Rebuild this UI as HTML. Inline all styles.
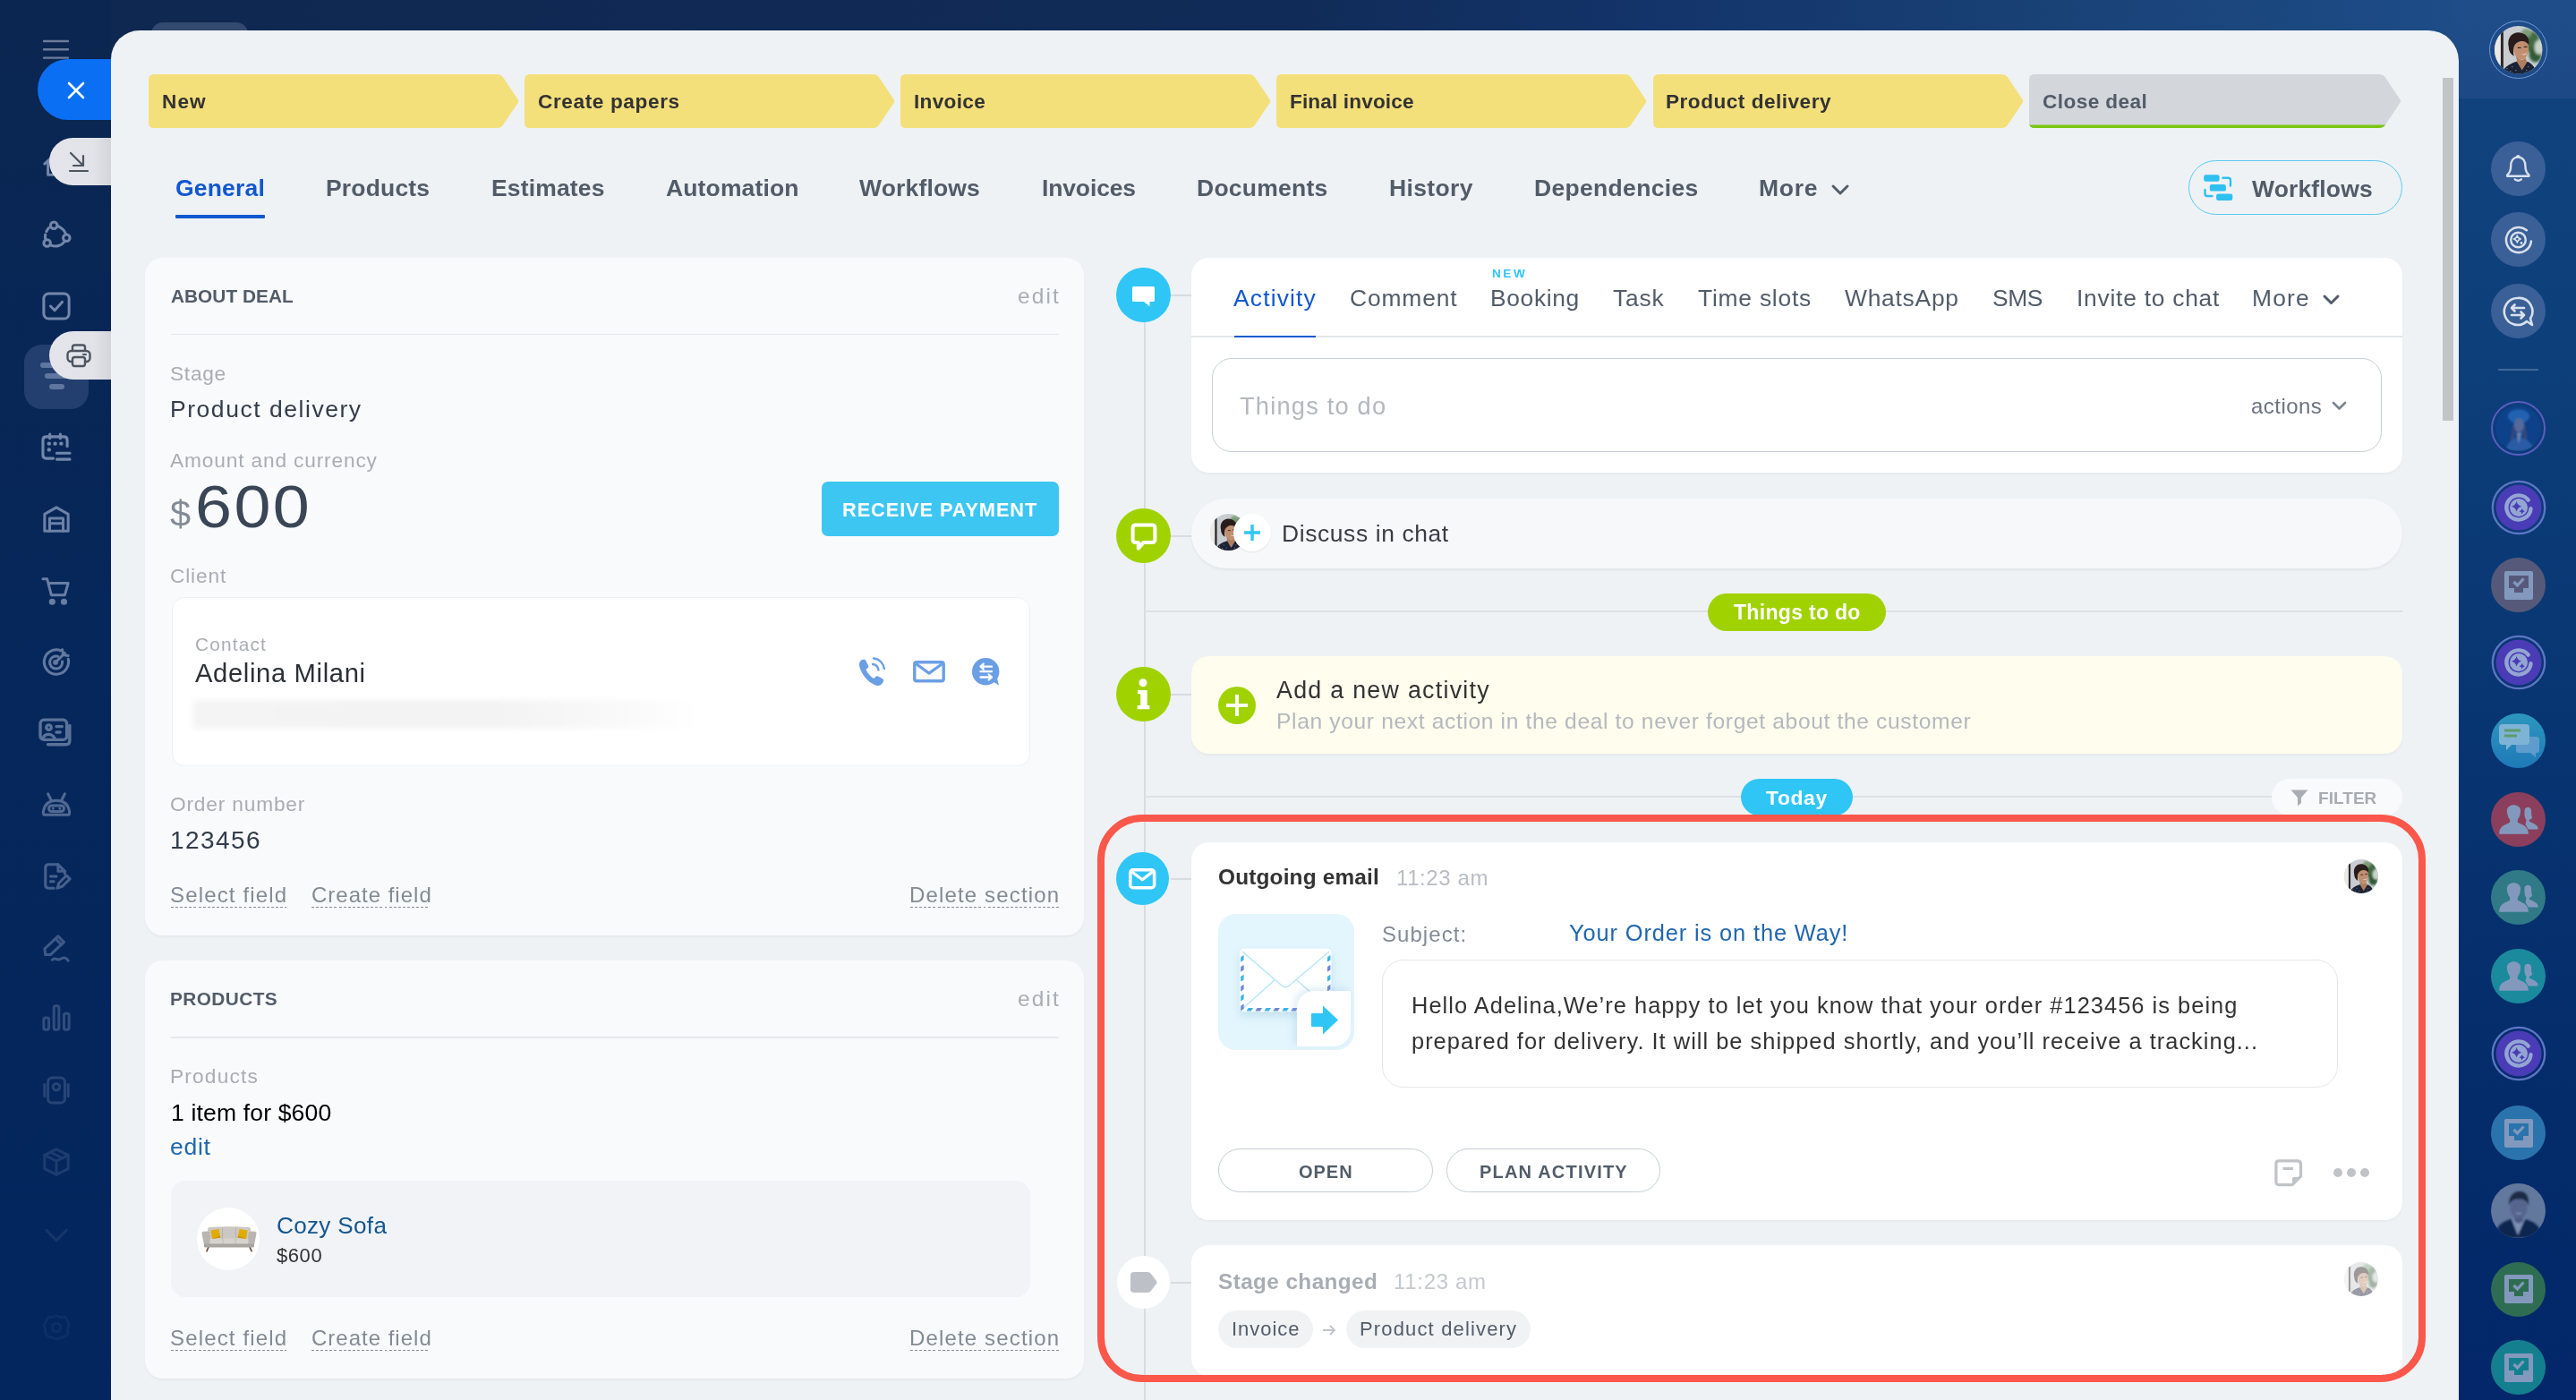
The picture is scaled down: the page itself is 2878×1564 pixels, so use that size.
<!DOCTYPE html>
<html lang="en">
<head>
<meta charset="utf-8">
<title>Deal</title>
<style>
*{box-sizing:border-box;margin:0;padding:0}
html,body{width:2878px;height:1564px;overflow:hidden}
body{position:relative;font-family:"Liberation Sans",sans-serif;background:#0a2a5e;color:#333}
.a{position:absolute}
.t{position:absolute;white-space:nowrap;line-height:1;will-change:transform}
.b{font-weight:bold}
svg{position:absolute;overflow:visible}
#topband{left:0;top:0;width:2878px;height:60px;background:linear-gradient(90deg,#0e2850 0%,#102b57 50%,#13346a 64%,#194277 80%,#1f4f8c 100%)}
#leftbar{left:0;top:0;width:124px;height:1564px;background:linear-gradient(180deg,#0b2651 0%,#06275a 45%,#03265f 100%)}
#rail{left:2740px;top:0;width:138px;height:1564px;background:linear-gradient(180deg,#11447f 0%,#10437e 7%,#0d3f7b 25%,#083672 50%,#042c6a 78%,#03276a 100%)}
#panel{left:124px;top:34px;width:2623px;height:1560px;background:#eef2f5;border-radius:32px 34px 0 0}
.ico{stroke:#8fa0c0;stroke-width:3.2;fill:none;stroke-linecap:round;stroke-linejoin:round}
.card{position:absolute;background:#f9fafb;border-radius:20px;box-shadow:0 2px 3px rgba(0,0,0,.04)}
.circ{position:absolute;border-radius:50%}
.wcard{position:absolute;left:1331px;width:1353px;background:#fff;border-radius:20px;box-shadow:0 2px 3px rgba(0,0,0,.03)}
</style>
</head>
<body>
<div class="a" id="topband"></div>
<div class="a" id="leftbar"></div>
<div class="a" id="rail"></div>
<div class="a" style="left:2740px;top:0px;width:138px;height:110px;background:linear-gradient(180deg,#1f4d8a,#1d4a87);"></div>
<svg style="left:48px;top:44px;" width="29" height="23"><path d="M1,2 H28 M1,11.3 H28 M1,20.6 H28" stroke="#6d7c99" stroke-width="2.4" stroke-linecap="round"/></svg>
<svg class="ico" style="left:47.0px;top:168.0px;opacity:0.8" width="32" height="32" viewBox="0 0 34 34"><path d="M3,16 L17,3 L31,16 M7,13 V29 H27 V13"/></svg>
<svg class="ico" style="left:46.5px;top:247.0px;opacity:0.8" width="32" height="32" viewBox="0 0 34 34"><circle cx="14" cy="5" r="4"/><circle cx="29" cy="20" r="4"/><circle cx="6" cy="26" r="4"/><path d="M19,6 C23,8 27,11 28,15"/><path d="M26,25 C23,29 17,31 11,29"/><path d="M4,21 C3,16 5,11 9,7" stroke-dasharray="5 4"/></svg>
<svg class="ico" style="left:46.5px;top:325.6px;opacity:0.8" width="32" height="32" viewBox="0 0 34 34"><rect x="2" y="2" width="30" height="30" rx="6"/><path d="M10,17 L15,22 L24,12"/></svg>
<div class="a" style="left:27px;top:385px;width:72px;height:72px;background:#223f70;border-radius:20px;"></div>
<svg style="left:45px;top:404px;" width="36" height="34"><path d="M3,4 H26 M8,16 H31 M13,28 H24" stroke="#5f76a0" stroke-width="6" stroke-linecap="round"/></svg>
<svg class="ico" style="left:46.0px;top:482.5px;opacity:0.8" width="33" height="33" viewBox="0 0 34 34"><path d="M14,30 H6 Q2,30 2,26 V9 Q2,5 6,5 H26 Q30,5 30,9 V16"/><path d="M10,2 V7 M22,2 V7"/><path d="M18,24 H33 M18,31 H33"/><path d="M9,13 h0.1 M16,13 h0.1 M23,13 h0.1 M9,20 h0.1" stroke-width="4.5"/></svg>
<svg class="ico" style="left:46.5px;top:564.0px;opacity:0.75" width="32" height="32" viewBox="0 0 34 34"><path d="M3,31 V11 L17,3 L31,11 V31 Z"/><path d="M9,31 V16 H25 V31 M9,22 H25"/></svg>
<svg class="ico" style="left:46.5px;top:644.0px;opacity:0.72" width="32" height="32" viewBox="0 0 34 34"><path d="M1,3 H6 L11,22 H27 L31,8 H9"/><circle cx="12" cy="30" r="2.2" fill="#8fa0c0"/><circle cx="26" cy="30" r="2.2" fill="#8fa0c0"/></svg>
<svg class="ico" style="left:46.5px;top:723.0px;opacity:0.68" width="32" height="32" viewBox="0 0 34 34"><path d="M22,4 A14.5,14.5 0 1 0 31,14"/><path d="M19,11 A7.5,7.5 0 1 0 24,17"/><path d="M16,18 L27,7 M24,3 L25,9 L31,10"/><circle cx="16" cy="18" r="1.5" fill="#8fa0c0"/></svg>
<svg class="ico" style="left:45.0px;top:801.0px;opacity:0.62" width="36" height="36" viewBox="0 0 34 34"><rect x="0" y="3" width="28" height="21" rx="4"/><path d="M31,9 V25 Q31,29 27,29 H8"/><circle cx="9" cy="11" r="2.6"/><path d="M3,22 C5,17 12,17 15,22"/><path d="M17,10 H23 M17,16 H21"/></svg>
<svg class="ico" style="left:46.5px;top:883.0px;opacity:0.55" width="32" height="32" viewBox="0 0 34 34"><path d="M3,29 Q1,29 1.5,25 C3,16 9,12 17,12 C25,12 31,16 32.5,25 Q33,29 31,29 Z"/><path d="M7,4 L11,12 M27,4 L23,12"/><rect x="8" y="18" width="18" height="7" rx="3.5"/><path d="M13,21.5 h0.1 M21,21.5 h0.1" stroke-width="3"/></svg>
<svg class="ico" style="left:46.5px;top:963.0px;opacity:0.48" width="32" height="32" viewBox="0 0 34 34"><path d="M14,31 H8 Q4,31 4,27 V7 Q4,3 8,3 H19 L27,11 V14"/><path d="M19,3 V11 H27"/><path d="M10,17 H17 M10,23 H14"/><path d="M18,31 L20,25 L29,16 L33,20 L24,29 Z"/></svg>
<svg class="ico" style="left:46.5px;top:1044.0px;opacity:0.42" width="32" height="32" viewBox="0 0 34 34"><path d="M4,24 L3,17 L19,2 L26,9 L10,24 Z"/><path d="M16,5 L23,12"/><path d="M4,24 L8,24"/><path d="M12,30 C16,26 18,32 22,29 C26,26 29,28 31,31"/></svg>
<svg class="ico" style="left:46.5px;top:1121.0px;opacity:0.32" width="32" height="32" viewBox="0 0 34 34"><rect x="2" y="17" width="6" height="14" rx="2"/><rect x="14" y="3" width="6" height="28" rx="2"/><rect x="26" y="12" width="6" height="19" rx="2"/></svg>
<svg class="ico" style="left:46.5px;top:1202.0px;opacity:0.25" width="32" height="32" viewBox="0 0 34 34"><rect x="7" y="2" width="20" height="30" rx="5"/><path d="M3,10 V24 M31,10 V24"/><circle cx="17" cy="13" r="4"/></svg>
<svg class="ico" style="left:46.5px;top:1282.0px;opacity:0.18" width="32" height="32" viewBox="0 0 34 34"><path d="M17,2 L31,9 V25 L17,32 L3,25 V9 Z"/><path d="M3,9 L17,16 L31,9 M17,16 V32 M10,5.5 L24,12.5"/></svg>
<svg class="ico" style="left:46.5px;top:1363.0px;opacity:0.13" width="32" height="32" viewBox="0 0 34 34"><path d="M5,12 L17,24 L29,12"/></svg>
<svg class="ico" style="left:46.5px;top:1467.0px;opacity:0.07" width="32" height="32" viewBox="0 0 34 34"><path d="M17,3 L22,5 L27,4 L30,9 L32,14 L30,19 L31,24 L27,28 L22,29 L17,31 L12,29 L7,28 L4,24 L4,19 L2,14 L5,9 L8,4 L12,5 Z"/><circle cx="17" cy="17" r="5"/></svg>
<div class="a" style="left:168.5px;top:25px;width:108.5px;height:30px;background:#33496f;border-radius:13px 13px 0 0;"></div>
<div class="a" style="left:42px;top:66px;width:100px;height:68px;background:#0b6ff3;border-radius:34px 0 0 34px;"></div>
<svg style="left:75px;top:91px;" width="20" height="20"><path d="M2,2 L18,18 M18,2 L2,18" stroke="#fff" stroke-width="2.6" stroke-linecap="round"/></svg>
<div class="a" style="left:55px;top:154px;width:90px;height:53px;background:linear-gradient(90deg,#e3e5ea 0%,#e1e3e8 55%,#d3d5da 77%);border-radius:27px 0 0 27px;"></div>
<svg style="left:76px;top:169px;" width="24" height="24"><path d="M3,2 L17,16 M17,5 V16 H6 M2,22 H22" stroke="#4d5560" stroke-width="2.2" fill="none" stroke-linecap="round" stroke-linejoin="round"/></svg>
<div class="a" style="left:55px;top:370px;width:90px;height:54px;background:linear-gradient(90deg,#e3e5ea 0%,#e1e3e8 55%,#d3d5da 77%);border-radius:27px 0 0 27px;"></div>
<svg style="left:74px;top:384px;" width="28" height="27" viewBox="0 0 28 27"><path d="M7,9 V4 Q7,1.500 9.500,1.500 H18.500 Q21,1.500 21,4 V9" fill="none" stroke="#4d5560" stroke-width="2.4"/><rect x="1.500" y="8" width="25" height="12" rx="4" fill="none" stroke="#4d5560" stroke-width="2.4"/><rect x="7" y="15" width="14" height="10" rx="2.500" fill="#e2e4e9" stroke="#4d5560" stroke-width="2.4"/><path d="M19,12 H22" stroke="#4d5560" stroke-width="2.2" stroke-linecap="round"/></svg>
<div class="a" id="panel"></div>
<svg style="left:166.0px;top:83px;" width="413.5" height="60"><path d="M6,0 H388.5 Q394.5,0 396.5,4 L412.9,28.5 Q413.5,30.0 412.9,31.5 L396.5,56 Q394.5,60 388.5,60 H6 Q0,60 0,54 V6 Q0,0 6,0 Z" fill="#f4e07a"/></svg>
<div class="t b" id="s0" style="left:180.5px;top:102.7px;font-size:22.6px;color:#333;letter-spacing:1.11px;">New</div>
<svg style="left:586.1px;top:83px;" width="413.5" height="60"><path d="M6,0 H388.5 Q394.5,0 396.5,4 L412.9,28.5 Q413.5,30.0 412.9,31.5 L396.5,56 Q394.5,60 388.5,60 H6 Q0,60 0,54 V6 Q0,0 6,0 Z" fill="#f4e07a"/></svg>
<div class="t b" id="s1" style="left:600.6px;top:102.7px;font-size:22.6px;color:#333;letter-spacing:0.62px;">Create papers</div>
<svg style="left:1006.3px;top:83px;" width="413.5" height="60"><path d="M6,0 H388.5 Q394.5,0 396.5,4 L412.9,28.5 Q413.5,30.0 412.9,31.5 L396.5,56 Q394.5,60 388.5,60 H6 Q0,60 0,54 V6 Q0,0 6,0 Z" fill="#f4e07a"/></svg>
<div class="t b" id="s2" style="left:1021.0px;top:102.7px;font-size:22.6px;color:#333;letter-spacing:0.31px;">Invoice</div>
<svg style="left:1426.4px;top:83px;" width="413.5" height="60"><path d="M6,0 H388.5 Q394.5,0 396.5,4 L412.9,28.5 Q413.5,30.0 412.9,31.5 L396.5,56 Q394.5,60 388.5,60 H6 Q0,60 0,54 V6 Q0,0 6,0 Z" fill="#f4e07a"/></svg>
<div class="t b" id="s3" style="left:1441.3px;top:102.7px;font-size:22.6px;color:#333;letter-spacing:0.14px;">Final invoice</div>
<svg style="left:1846.6px;top:83px;" width="413.5" height="60"><path d="M6,0 H388.5 Q394.5,0 396.5,4 L412.9,28.5 Q413.5,30.0 412.9,31.5 L396.5,56 Q394.5,60 388.5,60 H6 Q0,60 0,54 V6 Q0,0 6,0 Z" fill="#f4e07a"/></svg>
<div class="t b" id="s4" style="left:1861.3px;top:102.7px;font-size:22.6px;color:#333;letter-spacing:0.50px;">Product delivery</div>
<svg style="left:2266.8px;top:83px;" width="415.3" height="60"><path d="M6,0 H390.3 Q396.3,0 398.3,4 L414.7,28.5 Q415.3,30.0 414.7,31.5 L398.3,56 Q396.3,60 390.3,60 H6 Q0,60 0,54 V6 Q0,0 6,0 Z" fill="#d3d7dc"/><clipPath id="cls"><path d="M6,0 H390.3 Q396.3,0 398.3,4 L414.7,28.5 Q415.3,30.0 414.7,31.5 L398.3,56 Q396.3,60 390.3,60 H6 Q0,60 0,54 V6 Q0,0 6,0 Z"/></clipPath><rect x="0" y="56.5" width="401.3" height="4" fill="#7ac70f" clip-path="url(#cls)"/></svg>
<div class="t b" id="s5" style="left:2281.7px;top:102.7px;font-size:22.6px;color:#525c69;letter-spacing:0.42px;">Close deal</div>
<div class="t b" id="tab0" style="left:196.0px;top:197.3px;font-size:26.5px;color:#1058d0;letter-spacing:0.18px;">General</div>
<div class="t b" id="tab1" style="left:364.2px;top:197.3px;font-size:26.5px;color:#525c69;letter-spacing:0.18px;">Products</div>
<div class="t b" id="tab2" style="left:548.7px;top:197.3px;font-size:26.5px;color:#525c69;letter-spacing:0.15px;">Estimates</div>
<div class="t b" id="tab3" style="left:743.7px;top:197.3px;font-size:26.5px;color:#525c69;letter-spacing:0.14px;">Automation</div>
<div class="t b" id="tab4" style="left:960.2px;top:197.3px;font-size:26.5px;color:#525c69;letter-spacing:0.17px;">Workflows</div>
<div class="t b" id="tab5" style="left:1163.7px;top:197.3px;font-size:26.5px;color:#525c69;letter-spacing:-0.14px;">Invoices</div>
<div class="t b" id="tab6" style="left:1337.4px;top:197.3px;font-size:26.5px;color:#525c69;letter-spacing:0.25px;">Documents</div>
<div class="t b" id="tab7" style="left:1552.2px;top:197.3px;font-size:26.5px;color:#525c69;letter-spacing:0.36px;">History</div>
<div class="t b" id="tab8" style="left:1713.9px;top:197.3px;font-size:26.5px;color:#525c69;letter-spacing:0.32px;">Dependencies</div>
<div class="t b" id="tab9" style="left:1965.4px;top:197.3px;font-size:26.5px;color:#525c69;letter-spacing:0.69px;">More</div>
<div class="a" style="left:196px;top:240px;width:100px;height:4px;background:#1058d0;border-radius:1px;"></div>
<svg style="left:2046px;top:205.5px;" width="20" height="12"><path d="M2,2 L10,10 L18,2" stroke="#525c69" stroke-width="3" fill="none" stroke-linecap="round" stroke-linejoin="round"/></svg>
<div class="a" style="left:2445px;top:179px;width:239px;height:61px;border-radius:31px;border:1.5px solid #5cc9ef;"></div>
<svg style="left:2462px;top:195px;" width="34" height="30" viewBox="0 0 34 30"><rect x="0.2" y="0.2" width="17.4" height="7.6" rx="2.2" fill="#2fc0f2"/><rect x="6.8" y="11" width="18.1" height="7.6" rx="2.2" fill="#2fc0f2"/><rect x="14.1" y="21.4" width="18.2" height="7.6" rx="2.2" fill="#2fc0f2"/><path d="M21.500,3.800 H27.500 Q30,3.800 30,6.300 V12.500" stroke="#2fc0f2" stroke-width="2.4" fill="none" stroke-linecap="round"/><path d="M1.500,17 V21.500 Q1.500,24 4,24 H9.500" stroke="#2fc0f2" stroke-width="2.4" fill="none" stroke-linecap="round"/></svg>
<div class="t b" id="wfbtn" style="left:2516.1px;top:197.8px;font-size:26.5px;color:#525c69;letter-spacing:0.15px;">Workflows</div>
<div class="card" style="left:162px;top:288px;width:1049px;height:757px"></div>
<div class="t b" id="t-about" style="left:190.5px;top:321.1px;font-size:20.8px;color:#525c69;letter-spacing:0.04px;">ABOUT DEAL</div>
<div class="t" id="t-edit1" style="left:1136.9px;top:319.0px;font-size:24.5px;color:#a8adb4;letter-spacing:2.11px;">edit</div>
<div class="a" style="left:191px;top:372.6px;width:992px;height:1.5px;background:#e6e8eb;"></div>
<div class="t" id="l-stage" style="left:190.4px;top:405.5px;font-size:22.7px;color:#a8adb4;letter-spacing:0.73px;">Stage</div>
<div class="t" id="t-stage" style="left:190.2px;top:443.8px;font-size:26.5px;color:#333d4b;letter-spacing:1.54px;">Product delivery</div>
<div class="t" id="l-amount" style="left:190.4px;top:502.7px;font-size:22.7px;color:#a8adb4;letter-spacing:0.85px;">Amount and currency</div>
<div class="t" id="t-dollar" style="left:190.3px;top:552.6px;font-size:41.5px;color:#828b95;letter-spacing:0.00px;">$</div>
<div class="t" id="t-600" style="left:217.5px;top:531.8px;font-size:67px;color:#3a4556;letter-spacing:2.17px;transform:scaleX(1.1);transform-origin:0 0;">600</div>
<div class="a" style="left:918px;top:538px;width:265px;height:61px;background:#3ec6f3;border-radius:7px;"></div>
<div class="t b" id="t-recv" style="left:941.3px;top:558.7px;font-size:21.8px;color:#fff;letter-spacing:0.90px;">RECEIVE PAYMENT</div>
<div class="t" id="l-client" style="left:190.4px;top:632.1px;font-size:22.7px;color:#a8adb4;letter-spacing:0.84px;">Client</div>
<div class="a" style="left:191.5px;top:666.5px;width:959.5px;height:189px;background:#fff;border-radius:14px;border:1.5px solid #eef0f2;"></div>
<div class="t" id="l-contact" style="left:217.9px;top:709.7px;font-size:20.8px;color:#a8adb4;letter-spacing:1.20px;">Contact</div>
<div class="t" id="t-name" style="left:217.5px;top:737.9px;font-size:29.2px;color:#2b2f36;letter-spacing:0.64px;">Adelina Milani</div>
<div class="a" style="left:216px;top:782px;width:570px;height:32px;background:linear-gradient(90deg,#f4f4f5 0%,#f3f3f4 60%,rgba(246,246,247,.6) 85%,rgba(255,255,255,0) 100%);filter:blur(3px);"></div>
<svg style="left:957px;top:732px;" width="34" height="36" viewBox="0 0 34 36"><path d="M6,5 C3,7 2,10 4,15 C7,23 12,29 20,33 C24,35 27,34 29,31 L30,29 C30.5,28 30,27 29,26.3 L24,23.5 C23,23 22,23.2 21.3,24 L19.5,26 C16,24 12,20 10.5,16 L12.5,14.3 C13.3,13.6 13.5,12.6 13,11.6 L10.3,6 C9.8,5 8.8,4.5 7.8,4.8 Z" fill="#6a9fe6"/><path d="M18,10 C21.5,10.5 24,13 24.5,16.5" stroke="#6a9fe6" stroke-width="2.4" fill="none" stroke-linecap="round"/><path d="M19,3.5 C25.5,4.2 30,9 31,15" stroke="#6a9fe6" stroke-width="2.4" fill="none" stroke-linecap="round"/></svg>
<svg style="left:1020px;top:738px;" width="36" height="24.5" viewBox="0 0 38 26"><rect x="1.8" y="1.8" width="34.4" height="22.4" rx="2.5" fill="none" stroke="#6a9fe6" stroke-width="3.6"/><path d="M3,3.5 L19,15 L35,3.5" fill="none" stroke="#6a9fe6" stroke-width="3.4" stroke-linejoin="round"/></svg>
<svg style="left:1085.9px;top:734.8px;" width="33" height="33" viewBox="0 0 33 33"><circle cx="15.2" cy="15.2" r="15.2" fill="#6a9fe6"/><path d="M22,25.500 L30,30.500 L27.500,21 Z" fill="#6a9fe6"/><path d="M9.500,9.700 H22 M9.500,9.700 L12.800,6.700 M9.500,9.700 L12.800,12.700" stroke="#fff" stroke-width="2.300" fill="none" stroke-linecap="round" stroke-linejoin="round"/><path d="M9.500,15.200 H22" stroke="#fff" stroke-width="2.300" stroke-linecap="round"/><path d="M22,21.500 H9.500 M22,21.500 L18.700,18.500 M22,21.500 L18.700,24.500" stroke="#fff" stroke-width="2.300" fill="none" stroke-linecap="round" stroke-linejoin="round"/></svg>
<div class="t" id="l-order" style="left:190.4px;top:887.2px;font-size:22.7px;color:#a8adb4;letter-spacing:0.83px;">Order number</div>
<div class="t" id="t-order" style="left:190.1px;top:924.8px;font-size:28px;color:#333d4b;letter-spacing:1.45px;">123456</div>
<div class="t" id="k-sel1" style="left:190.3px;top:987.9px;font-size:24px;color:#828b95;letter-spacing:1.16px;">Select field</div>
<div class="a" style="left:190.9px;top:1012.7px;width:129.4px;height:1.6px;background:repeating-linear-gradient(90deg,#858d97 0,#858d97 2.9px,transparent 2.9px,transparent 5.1px)"></div>
<div class="t" id="k-cre1" style="left:347.7px;top:987.9px;font-size:24px;color:#828b95;letter-spacing:1.00px;">Create field</div>
<div class="a" style="left:348.3px;top:1012.7px;width:132.89999999999998px;height:1.6px;background:repeating-linear-gradient(90deg,#858d97 0,#858d97 2.9px,transparent 2.9px,transparent 5.1px)"></div>
<div class="t" id="k-del1" style="left:1016.2px;top:987.9px;font-size:24px;color:#828b95;letter-spacing:1.15px;">Delete section</div>
<div class="a" style="left:1016.8px;top:1012.7px;width:166.29999999999995px;height:1.6px;background:repeating-linear-gradient(90deg,#858d97 0,#858d97 2.9px,transparent 2.9px,transparent 5.1px)"></div>
<div class="card" style="left:162px;top:1073px;width:1049px;height:467px"></div>
<div class="t b" id="t-products" style="left:189.9px;top:1106.4px;font-size:20.8px;color:#525c69;letter-spacing:0.42px;">PRODUCTS</div>
<div class="t" id="t-edit2" style="left:1136.9px;top:1104.0px;font-size:24.5px;color:#a8adb4;letter-spacing:2.11px;">edit</div>
<div class="a" style="left:191px;top:1158.2px;width:992px;height:1.5px;background:#e6e8eb;"></div>
<div class="t" id="l-products" style="left:189.8px;top:1190.5px;font-size:22.7px;color:#a8adb4;letter-spacing:1.18px;">Products</div>
<div class="t" id="t-item" style="left:190.6px;top:1229.9px;font-size:26.5px;color:#000;letter-spacing:0.17px;">1 item for $600</div>
<div class="t" id="t-edit3" style="left:190.1px;top:1268.1px;font-size:26.5px;color:#2067b0;letter-spacing:0.72px;">edit</div>
<div class="a" style="left:191px;top:1318.5px;width:960px;height:130.5px;background:#f1f3f6;border-radius:16px;"></div>
<div class="circ" style="left:220.0px;top:1349.0px;width:70px;height:70px;background:#fff;"></div>
<svg style="left:223.5px;top:1369px;" width="64" height="29" viewBox="0 0 64 29"><path d="M9,24 L7,28.600 M55,24 L57,28.600" stroke="#6b4a35" stroke-width="1.700" stroke-linecap="round"/><path d="M10,2 Q32,0.500 54,2 Q56.500,2.300 56,5 L54.500,16 H9.500 L8,5 Q7.500,2.300 10,2 Z" fill="#cbc8c3"/><path d="M24.500,2.500 V15 M39.500,2.500 V15" stroke="#b3b0ab" stroke-width="0.900"/><path d="M1.500,9 Q1,7 3,6.800 L8,6.500 Q10,6.500 10.300,8.500 L12,22 H4 Z" fill="#b9b6b1"/><path d="M62.500,9 Q63,7 61,6.800 L56,6.500 Q54,6.500 53.700,8.500 L52,22 H60 Z" fill="#b9b6b1"/><rect x="10.500" y="14.500" width="43" height="6.500" rx="1.500" fill="#d6d3ce"/><path d="M25,14.800 V21 M39,14.800 V21" stroke="#bcb9b4" stroke-width="0.800"/><rect x="4" y="20.500" width="56" height="4" rx="1.200" fill="#a8a5a0"/><path d="M11.500,5.500 L20.500,4 L22.500,13.500 L13,15 Z" fill="#e2ab00"/><path d="M52.500,5.500 L43.500,4 L41.500,13.500 L51,15 Z" fill="#e2ab00"/><path d="M13,15 L22.500,13.500 L21.800,11.500 Z" fill="#c89400"/><path d="M51,15 L41.500,13.500 L42.200,11.500 Z" fill="#c89400"/></svg>
<div class="t" id="t-sofa" style="left:308.8px;top:1356.4px;font-size:26.1px;color:#14568f;letter-spacing:0.32px;">Cozy Sofa</div>
<div class="t" id="t-price" style="left:309.0px;top:1392.4px;font-size:22px;color:#333;letter-spacing:0.57px;">$600</div>
<div class="t" id="k-sel2" style="left:190.3px;top:1482.9px;font-size:24px;color:#828b95;letter-spacing:1.16px;">Select field</div>
<div class="a" style="left:190.9px;top:1507.7px;width:129.4px;height:1.6px;background:repeating-linear-gradient(90deg,#858d97 0,#858d97 2.9px,transparent 2.9px,transparent 5.1px)"></div>
<div class="t" id="k-cre2" style="left:347.7px;top:1482.9px;font-size:24px;color:#828b95;letter-spacing:1.00px;">Create field</div>
<div class="a" style="left:348.3px;top:1507.7px;width:132.89999999999998px;height:1.6px;background:repeating-linear-gradient(90deg,#858d97 0,#858d97 2.9px,transparent 2.9px,transparent 5.1px)"></div>
<div class="t" id="k-del2" style="left:1016.2px;top:1482.9px;font-size:24px;color:#828b95;letter-spacing:1.15px;">Delete section</div>
<div class="a" style="left:1016.8px;top:1507.7px;width:166.29999999999995px;height:1.6px;background:repeating-linear-gradient(90deg,#858d97 0,#858d97 2.9px,transparent 2.9px,transparent 5.1px)"></div>
<div class="a" style="left:1278px;top:330px;width:2px;height:1240px;background:#d8dce1;"></div>
<div class="a" style="left:1279px;top:682px;width:1405px;height:2px;background:#dde1e6;"></div>
<div class="a" style="left:1279px;top:889px;width:1405px;height:2px;background:#dde1e6;"></div>
<div class="a" style="left:1308px;top:329.3px;width:23px;height:1.5px;background:#d8dce1;"></div>
<div class="a" style="left:1308px;top:598.3px;width:23px;height:1.5px;background:#d8dce1;"></div>
<div class="a" style="left:1308px;top:775.3px;width:23px;height:1.5px;background:#d8dce1;"></div>
<div class="a" style="left:1308px;top:981.3px;width:23px;height:1.5px;background:#d8dce1;"></div>
<div class="a" style="left:1308px;top:1432.3px;width:23px;height:1.5px;background:#d8dce1;"></div>
<div class="wcard" style="top:288px;height:240px"></div>
<div class="a" style="left:1331px;top:375px;width:1353px;height:2px;background:#e4e7ea;"></div>
<div class="t" id="at0" style="left:1378.0px;top:320.0px;font-size:26.4px;color:#1058d0;letter-spacing:1.17px;">Activity</div>
<div class="t" id="at1" style="left:1507.6px;top:320.0px;font-size:26.4px;color:#525c69;letter-spacing:0.88px;">Comment</div>
<div class="t" id="at2" style="left:1665.2px;top:320.0px;font-size:26.4px;color:#525c69;letter-spacing:0.65px;">Booking</div>
<div class="t" id="at3" style="left:1802.3px;top:320.0px;font-size:26.4px;color:#525c69;letter-spacing:0.80px;">Task</div>
<div class="t" id="at4" style="left:1896.5px;top:320.0px;font-size:26.4px;color:#525c69;letter-spacing:0.78px;">Time slots</div>
<div class="t" id="at5" style="left:2061.1px;top:320.0px;font-size:26.4px;color:#525c69;letter-spacing:0.75px;">WhatsApp</div>
<div class="t" id="at6" style="left:2225.8px;top:320.0px;font-size:26.4px;color:#525c69;letter-spacing:-0.36px;">SMS</div>
<div class="t" id="at7" style="left:2319.8px;top:320.0px;font-size:26.4px;color:#525c69;letter-spacing:0.75px;">Invite to chat</div>
<div class="t" id="at8" style="left:2516.4px;top:320.0px;font-size:26.4px;color:#525c69;letter-spacing:1.18px;">More</div>
<div class="a" style="left:1378.5px;top:374.6px;width:91.5px;height:2.5px;background:#1058d0;"></div>
<div class="t b" id="t-new" style="left:1666.8px;top:298.9px;font-size:13.6px;color:#2fc6f6;letter-spacing:2.55px;">NEW</div>
<svg style="left:2595px;top:329px;" width="19" height="12"><path d="M2,2 L9.5,9.5 L17,2" stroke="#525c69" stroke-width="3" fill="none" stroke-linecap="round" stroke-linejoin="round"/></svg>
<div class="a" style="left:1354px;top:400px;width:1307px;height:105px;background:#fff;border-radius:22px;border:1.5px solid #c9cfd5;"></div>
<div class="t" id="t-things" style="left:1385.0px;top:440.3px;font-size:27.3px;color:#b3b8be;letter-spacing:1.17px;">Things to do</div>
<div class="t" id="t-actions" style="left:2514.9px;top:442.1px;font-size:24px;color:#6a737f;letter-spacing:0.46px;">actions</div>
<svg style="left:2605px;top:448px;" width="17" height="11"><path d="M2,2 L8.5,8.5 L15,2" stroke="#7b848f" stroke-width="2.6" fill="none" stroke-linecap="round" stroke-linejoin="round"/></svg>
<div class="circ" style="left:1247.0px;top:299.0px;width:61px;height:61px;background:#2fc6f6;"></div>
<svg style="left:1264.3px;top:320px;" width="27" height="24" viewBox="0 0 27 24"><path d="M2.5,0 H24.5 Q26,0 26,1.5 V15.5 Q26,17 24.5,17 H20.5 V22.5 L14,17 H2.5 Q1,17 1,15.5 V1.5 Q1,0 2.5,0 Z" fill="#fff"/></svg>
<div class="a" style="left:1331px;top:557px;width:1353px;height:78px;background:#f7f8fa;border-radius:39px;box-shadow:0 2px 3px rgba(0,0,0,.05);"></div>
<svg style="left:1351.5px;top:574.2px;opacity:1;" width="41" height="41" viewBox="0 0 54 54"><defs><clipPath id="av1"><circle cx="27" cy="27" r="27"/></clipPath><filter id="av1b" x="-10%" y="-10%" width="120%" height="120%"><feGaussianBlur stdDeviation="1.6"/></filter><filter id="av1s" x="-10%" y="-10%" width="120%" height="120%"><feGaussianBlur stdDeviation="0.5"/></filter></defs><g clip-path="url(#av1)"><rect width="54" height="54" fill="#c9cdd2"/><rect x="0" y="4" width="7" height="50" fill="#ece9e6"/><rect x="7" y="6" width="3" height="42" fill="#2b2a2a"/><g filter="url(#av1b)"><ellipse cx="42" cy="18" rx="9" ry="12" fill="#3f6b40"/><ellipse cx="46" cy="32" rx="7" ry="9" fill="#2f5a35"/><ellipse cx="36" cy="8" rx="6" ry="5" fill="#7d9c78"/><ellipse cx="50" cy="24" rx="5" ry="8" fill="#c9d2c8"/></g><g filter="url(#av1s)"><path d="M16,24 C13,12 22,5 31,8 C38,10 40,17 38,22 C34,16 26,16 22,24 C21,28 21,31 22,34 C18,32 16,28 16,24 Z" fill="#2a1f1c"/><path d="M22,23 C25,16 35,15 38,21 C39,26 38,32 35,36 C32,39 27,38 24,34 C22,31 21,27 22,23 Z" fill="#c18f6f"/><path d="M29,31 Q33,33.500 37,30 Q34,35 29,31 Z" fill="#f4efe9"/><path d="M26.500,24.500 h3 M33.500,23.500 h3" stroke="#3a2a24" stroke-width="1.300" stroke-linecap="round"/><path d="M24,33 C25,38 26,40 24,43 L31,52 L37,42 L35,36 C31,40 27,38 24,33 Z" fill="#b07f60"/><path d="M8,54 C10,46 18,42 25,40 L31,50 L37,40 C42,42 46,46 47,54 Z" fill="#1d2334"/><path d="M14,48 h0.1 M20,46 h0.1 M18,51 h0.1 M38,46 h0.1 M42,50 h0.1 M36,50 h0.1 M24,50 h0.1" stroke="#8f98ad" stroke-width="1.200" stroke-linecap="round"/></g></g></svg>
<div class="circ" style="left:1377.7px;top:573.7px;width:42px;height:42px;background:#fff;box-shadow:0 1px 2px rgba(0,0,0,.08);"></div>
<svg style="left:1388.7px;top:584.7px;" width="20" height="20"><path d="M10,1 V19 M1,10 H19" stroke="#2fc6f6" stroke-width="3.4"/></svg>
<div class="t" id="t-discuss" style="left:1432.4px;top:583.3px;font-size:26.4px;color:#383d45;letter-spacing:0.62px;">Discuss in chat</div>
<div class="circ" style="left:1247.0px;top:568.0px;width:61px;height:61px;background:#a0d200;"></div>
<svg style="left:1262.5px;top:583.9px;" width="30" height="31" viewBox="0 0 30 31"><path d="M6,2.500 H24 Q27.400,2.500 27.400,5.900 V18.700 Q27.400,22.100 24,22.100 H14.500 L8.800,28.700 L8.800,22.100 H6 Q2.600,22.100 2.600,18.700 V5.900 Q2.600,2.500 6,2.500 Z" fill="none" stroke="#fff" stroke-width="4" stroke-linejoin="round"/><path d="M8.800,22.100 H14.500 L8.800,28.700 Z" fill="#fff"/></svg>
<div class="a" style="left:1908px;top:663px;width:199px;height:42px;background:#a0d200;border-radius:21px;"></div>
<div class="t b" id="p-things" style="left:1936.5px;top:673.4px;font-size:23px;color:#fff;letter-spacing:0.31px;">Things to do</div>
<div class="a" style="left:1331px;top:733px;width:1353px;height:109px;background:#fefdee;border-radius:20px;box-shadow:0 2px 3px rgba(0,0,0,.04);"></div>
<div class="circ" style="left:1361.0px;top:767.0px;width:42px;height:42px;background:#a0d200;"></div>
<svg style="left:1370px;top:776px;" width="24" height="24"><path d="M12,0 V24 M0,12 H24" stroke="#fff" stroke-width="3.800"/></svg>
<div class="t" id="t-addnew" style="left:1426.2px;top:757.9px;font-size:26.8px;color:#333;letter-spacing:1.28px;">Add a new activity</div>
<div class="t" id="t-plan" style="left:1426.3px;top:794.4px;font-size:24.6px;color:#b4b8be;letter-spacing:0.64px;">Plan your next action in the deal to never forget about the customer</div>
<div class="circ" style="left:1247.0px;top:745.0px;width:61px;height:61px;background:#a0d200;"></div>
<svg style="left:1268px;top:757px;" width="18" height="37" viewBox="0 0 18 37"><circle cx="9" cy="5.700" r="4.500" fill="#fff"/><path d="M3,14 H13.700 V31 H16.300 V35.200 H2.700 V31 H6.200 V18.300 H3 Z" fill="#fff"/></svg>
<div class="a" style="left:1945px;top:870px;width:125px;height:40.5px;background:#2fc6f6;border-radius:21px;"></div>
<div class="t b" id="p-today" style="left:1973.2px;top:879.7px;font-size:22.9px;color:#fff;letter-spacing:0.60px;">Today</div>
<div class="a" style="left:2538px;top:870px;width:146px;height:40.5px;background:#f9fafb;border-radius:21px;"></div>
<svg style="left:2559px;top:882px;" width="20" height="19" viewBox="0 0 20 19"><path d="M0.5,0.5 H19.5 L12,9 V15 L8,18.5 V9 Z" fill="#a8adb4"/></svg>
<div class="t b" id="t-filter" style="left:2589.8px;top:882.4px;font-size:19px;color:#a8adb4;letter-spacing:0.05px;">FILTER</div>
<div class="wcard" style="top:941px;height:422px"></div>
<div class="t b" id="t-outgoing" style="left:1360.6px;top:968.4px;font-size:24.4px;color:#333;letter-spacing:0.17px;">Outgoing email</div>
<div class="t" id="t-time1" style="left:1559.7px;top:968.8px;font-size:24px;color:#b9bdc3;letter-spacing:0.59px;">11:23 am</div>
<svg style="left:2619.0px;top:960.0px;opacity:1;" width="38" height="38" viewBox="0 0 54 54"><defs><clipPath id="av2"><circle cx="27" cy="27" r="27"/></clipPath><filter id="av2b" x="-10%" y="-10%" width="120%" height="120%"><feGaussianBlur stdDeviation="1.6"/></filter><filter id="av2s" x="-10%" y="-10%" width="120%" height="120%"><feGaussianBlur stdDeviation="0.5"/></filter></defs><g clip-path="url(#av2)"><rect width="54" height="54" fill="#c9cdd2"/><rect x="0" y="4" width="7" height="50" fill="#ece9e6"/><rect x="7" y="6" width="3" height="42" fill="#2b2a2a"/><g filter="url(#av2b)"><ellipse cx="42" cy="18" rx="9" ry="12" fill="#3f6b40"/><ellipse cx="46" cy="32" rx="7" ry="9" fill="#2f5a35"/><ellipse cx="36" cy="8" rx="6" ry="5" fill="#7d9c78"/><ellipse cx="50" cy="24" rx="5" ry="8" fill="#c9d2c8"/></g><g filter="url(#av2s)"><path d="M16,24 C13,12 22,5 31,8 C38,10 40,17 38,22 C34,16 26,16 22,24 C21,28 21,31 22,34 C18,32 16,28 16,24 Z" fill="#2a1f1c"/><path d="M22,23 C25,16 35,15 38,21 C39,26 38,32 35,36 C32,39 27,38 24,34 C22,31 21,27 22,23 Z" fill="#c18f6f"/><path d="M29,31 Q33,33.500 37,30 Q34,35 29,31 Z" fill="#f4efe9"/><path d="M26.500,24.500 h3 M33.500,23.500 h3" stroke="#3a2a24" stroke-width="1.300" stroke-linecap="round"/><path d="M24,33 C25,38 26,40 24,43 L31,52 L37,42 L35,36 C31,40 27,38 24,33 Z" fill="#b07f60"/><path d="M8,54 C10,46 18,42 25,40 L31,50 L37,40 C42,42 46,46 47,54 Z" fill="#1d2334"/><path d="M14,48 h0.1 M20,46 h0.1 M18,51 h0.1 M38,46 h0.1 M42,50 h0.1 M36,50 h0.1 M24,50 h0.1" stroke="#8f98ad" stroke-width="1.200" stroke-linecap="round"/></g></g></svg>
<div class="a" style="left:1361px;top:1021px;width:152px;height:151.5px;background:#e3f5fd;border-radius:20px;"></div>
<svg style="left:1380px;top:1055px;" width="115" height="90" viewBox="0 0 115 90"><defs><filter id="sh" x="-20%" y="-20%" width="140%" height="160%"><feDropShadow dx="0" dy="5" stdDeviation="5" flood-color="#7fb9d8" flood-opacity=".32"/></filter></defs><rect x="5.2" y="4.8" width="102.1" height="70.4" rx="5" fill="#fff" filter="url(#sh)"/><path d="M8,8 L52,46 Q56.200,49.500 60.400,46 L105,8" fill="none" stroke="#b5e6f8" stroke-width="1.4"/><path d="M8,72 L44,40 M105,72 L69,40" fill="none" stroke="#b5e6f8" stroke-width="1.4"/><path d="M6.2,14.2 L9.6,12.0 L9.6,17.6 L6.2,19.8 Z" fill="#3bb4ec"/><path d="M103.0,14.2 L106.4,12.0 L106.4,17.6 L103.0,19.8 Z" fill="#3bb4ec"/><path d="M6.2,25.1 L9.6,22.9 L9.6,28.5 L6.2,30.7 Z" fill="#7088d6"/><path d="M103.0,25.1 L106.4,22.9 L106.4,28.5 L103.0,30.7 Z" fill="#7088d6"/><path d="M6.2,36.0 L9.6,33.8 L9.6,39.4 L6.2,41.6 Z" fill="#3bb4ec"/><path d="M103.0,36.0 L106.4,33.8 L106.4,39.4 L103.0,41.6 Z" fill="#3bb4ec"/><path d="M6.2,46.9 L9.6,44.7 L9.6,50.3 L6.2,52.5 Z" fill="#7088d6"/><path d="M103.0,46.9 L106.4,44.7 L106.4,50.3 L103.0,52.5 Z" fill="#7088d6"/><path d="M6.2,57.8 L9.6,55.6 L9.6,61.2 L6.2,63.4 Z" fill="#3bb4ec"/><path d="M6.2,68.7 L9.6,66.5 L9.6,72.1 L6.2,74.3 Z" fill="#7088d6"/><path d="M14.7,71.0 L20.1,71.0 L17.9,74.4 L12.5,74.4 Z" fill="#3bb4ec"/><path d="M24.6,71.0 L30.0,71.0 L27.9,74.4 L22.4,74.4 Z" fill="#7088d6"/><path d="M34.6,71.0 L40.0,71.0 L37.8,74.4 L32.4,74.4 Z" fill="#3bb4ec"/><path d="M44.5,71.0 L49.9,71.0 L47.7,74.4 L42.3,74.4 Z" fill="#7088d6"/><path d="M54.5,71.0 L59.9,71.0 L57.7,74.4 L52.3,74.4 Z" fill="#3bb4ec"/><path d="M64.5,71.0 L69.8,71.0 L67.7,74.4 L62.2,74.4 Z" fill="#7088d6"/></svg>
<div class="a" style="left:1449px;top:1107.3px;width:60.1px;height:61.8px;background:#fff;border-radius:19px 0 19px 0;box-shadow:-3px -3px 8px rgba(110,170,205,.22);"></div>
<svg style="left:1465px;top:1122px;" width="31" height="35" viewBox="0 0 31 35"><path d="M0,10 H13 V1.5 L30,17.5 L13,33.5 V25 H0 Z" fill="#2fc6f6"/></svg>
<div class="t" id="t-subject" style="left:1543.6px;top:1032.4px;font-size:24px;color:#828b95;letter-spacing:1.05px;">Subject:</div>
<div class="t" id="t-subj2" style="left:1752.9px;top:1029.7px;font-size:25.4px;color:#2067b0;letter-spacing:0.88px;">Your Order is on the Way!</div>
<div class="a" style="left:1544px;top:1072px;width:1068px;height:143px;background:#fff;border-radius:24px;border:1.5px solid #e4e7ea;"></div>
<div class="t" id="t-msg1" style="left:1576.6px;top:1110.8px;font-size:25.4px;color:#333;letter-spacing:1.04px;">Hello Adelina,We’re happy to let you know that your order #123456 is being</div>
<div class="t" id="t-msg2" style="left:1576.6px;top:1151.3px;font-size:25.4px;color:#333;letter-spacing:1.02px;">prepared for delivery. It will be shipped shortly, and you’ll receive a tracking...</div>
<div class="a" style="left:1361px;top:1283px;width:240px;height:49px;border-radius:25px;border:1.5px solid #c6cdd3;"></div>
<div class="t b" id="t-open" style="left:1450.8px;top:1298.5px;font-size:20px;color:#525c69;letter-spacing:0.97px;">OPEN</div>
<div class="a" style="left:1616.3px;top:1283px;width:238.5px;height:49px;border-radius:25px;border:1.5px solid #c6cdd3;"></div>
<div class="t b" id="t-planact" style="left:1652.9px;top:1298.5px;font-size:20px;color:#525c69;letter-spacing:1.19px;">PLAN ACTIVITY</div>
<svg style="left:2540.8px;top:1294.9px;" width="31.4" height="30.5" viewBox="0 0 33 32"><path d="M5,2 H27 Q31,2 31,6 V20 L21,30 H5 Q2,30 2,26 V6 Q2,2 5,2 Z" fill="none" stroke="#bfc3c8" stroke-width="3.4" stroke-linejoin="round"/><path d="M21,30 V23 Q21,21 23,21 H31 Z" fill="#bfc3c8"/><path d="M10,11 H22" stroke="#bfc3c8" stroke-width="3.4"/></svg>
<div class="circ" style="left:2607.0px;top:1305.4px;width:10px;height:10px;background:#bfc3c8;"></div>
<div class="circ" style="left:2622.2px;top:1305.4px;width:10px;height:10px;background:#bfc3c8;"></div>
<div class="circ" style="left:2637.4px;top:1305.4px;width:10px;height:10px;background:#bfc3c8;"></div>
<div class="circ" style="left:1247.1px;top:951.9px;width:59px;height:59px;background:#2fc6f6;"></div>
<svg style="left:1261.2px;top:969.6px;" width="30.4" height="23.5" viewBox="0 0 31 24"><rect x="1.8" y="1.8" width="27.4" height="20.4" rx="3" fill="none" stroke="#fff" stroke-width="3.6"/><path d="M3,3.5 L15.5,13 L28,3.5" fill="none" stroke="#fff" stroke-width="3.4" stroke-linejoin="round"/></svg>
<div class="a" style="left:1331px;top:1391px;width:1353px;height:146px;background:#fff;border-radius:20px;"></div>
<div class="t b" id="t-stagechg" style="left:1360.5px;top:1419.5px;font-size:24.3px;color:#a8adb4;letter-spacing:0.42px;">Stage changed</div>
<div class="t" id="t-time2" style="left:1557.3px;top:1419.8px;font-size:24px;color:#c5c9ce;letter-spacing:0.69px;">11:23 am</div>
<div class="a" style="left:1361px;top:1464px;width:106px;height:42px;background:#f1f2f4;border-radius:21px;"></div>
<div class="t" id="t-chip1" style="left:1376.3px;top:1474.3px;font-size:22px;color:#525c69;letter-spacing:0.96px;">Invoice</div>
<svg style="left:1477px;top:1479px;" width="16" height="14"><path d="M1,7 H14 M9,2 L14,7 L9,12" stroke="#c0c4ca" stroke-width="1.8" fill="none"/></svg>
<div class="a" style="left:1503.5px;top:1464px;width:206.5px;height:42px;background:#f1f2f4;border-radius:21px;"></div>
<div class="t" id="t-chip2" style="left:1518.9px;top:1474.3px;font-size:22px;color:#525c69;letter-spacing:1.15px;">Product delivery</div>
<svg style="left:2619.0px;top:1410.0px;opacity:0.45;" width="38" height="38" viewBox="0 0 54 54"><defs><clipPath id="av3"><circle cx="27" cy="27" r="27"/></clipPath><filter id="av3b" x="-10%" y="-10%" width="120%" height="120%"><feGaussianBlur stdDeviation="1.6"/></filter><filter id="av3s" x="-10%" y="-10%" width="120%" height="120%"><feGaussianBlur stdDeviation="0.5"/></filter></defs><g clip-path="url(#av3)"><rect width="54" height="54" fill="#c9cdd2"/><rect x="0" y="4" width="7" height="50" fill="#ece9e6"/><rect x="7" y="6" width="3" height="42" fill="#2b2a2a"/><g filter="url(#av3b)"><ellipse cx="42" cy="18" rx="9" ry="12" fill="#3f6b40"/><ellipse cx="46" cy="32" rx="7" ry="9" fill="#2f5a35"/><ellipse cx="36" cy="8" rx="6" ry="5" fill="#7d9c78"/><ellipse cx="50" cy="24" rx="5" ry="8" fill="#c9d2c8"/></g><g filter="url(#av3s)"><path d="M16,24 C13,12 22,5 31,8 C38,10 40,17 38,22 C34,16 26,16 22,24 C21,28 21,31 22,34 C18,32 16,28 16,24 Z" fill="#2a1f1c"/><path d="M22,23 C25,16 35,15 38,21 C39,26 38,32 35,36 C32,39 27,38 24,34 C22,31 21,27 22,23 Z" fill="#c18f6f"/><path d="M29,31 Q33,33.500 37,30 Q34,35 29,31 Z" fill="#f4efe9"/><path d="M26.500,24.500 h3 M33.500,23.500 h3" stroke="#3a2a24" stroke-width="1.300" stroke-linecap="round"/><path d="M24,33 C25,38 26,40 24,43 L31,52 L37,42 L35,36 C31,40 27,38 24,33 Z" fill="#b07f60"/><path d="M8,54 C10,46 18,42 25,40 L31,50 L37,40 C42,42 46,46 47,54 Z" fill="#1d2334"/><path d="M14,48 h0.1 M20,46 h0.1 M18,51 h0.1 M38,46 h0.1 M42,50 h0.1 M36,50 h0.1 M24,50 h0.1" stroke="#8f98ad" stroke-width="1.200" stroke-linecap="round"/></g></g></svg>
<div class="circ" style="left:1247.8px;top:1403.1px;width:59px;height:59px;background:#fff;"></div>
<svg style="left:1263px;top:1421px;" width="30" height="23" viewBox="0 0 30 23"><path d="M4,0 H19 Q21.5,0 23,2 L29,10 Q30,11.5 29,13 L23,21 Q21.5,23 19,23 H4 Q0,23 0,19 V4 Q0,0 4,0 Z" fill="#bdc1c7"/></svg>
<div class="a" style="left:1226px;top:910px;width:1484px;height:634px;border-radius:50px;border:8px solid #fb574b;"></div>
<div class="a" style="left:2729px;top:87px;width:12px;height:383px;background:#c1c5c8;"></div>
<div class="circ" style="left:2781.0px;top:22.5px;width:65px;height:65px;border:1.5px solid #6f9ad6"></div>
<svg style="left:2786.75px;top:28.549999999999997px;opacity:1;" width="53.5" height="53.5" viewBox="0 0 54 54"><defs><clipPath id="avu"><circle cx="27" cy="27" r="27"/></clipPath><filter id="avub" x="-10%" y="-10%" width="120%" height="120%"><feGaussianBlur stdDeviation="1.6"/></filter><filter id="avus" x="-10%" y="-10%" width="120%" height="120%"><feGaussianBlur stdDeviation="0.5"/></filter></defs><g clip-path="url(#avu)"><rect width="54" height="54" fill="#c9cdd2"/><rect x="0" y="4" width="7" height="50" fill="#ece9e6"/><rect x="7" y="6" width="3" height="42" fill="#2b2a2a"/><g filter="url(#avub)"><ellipse cx="42" cy="18" rx="9" ry="12" fill="#3f6b40"/><ellipse cx="46" cy="32" rx="7" ry="9" fill="#2f5a35"/><ellipse cx="36" cy="8" rx="6" ry="5" fill="#7d9c78"/><ellipse cx="50" cy="24" rx="5" ry="8" fill="#c9d2c8"/></g><g filter="url(#avus)"><path d="M16,24 C13,12 22,5 31,8 C38,10 40,17 38,22 C34,16 26,16 22,24 C21,28 21,31 22,34 C18,32 16,28 16,24 Z" fill="#2a1f1c"/><path d="M22,23 C25,16 35,15 38,21 C39,26 38,32 35,36 C32,39 27,38 24,34 C22,31 21,27 22,23 Z" fill="#c18f6f"/><path d="M29,31 Q33,33.500 37,30 Q34,35 29,31 Z" fill="#f4efe9"/><path d="M26.500,24.500 h3 M33.500,23.500 h3" stroke="#3a2a24" stroke-width="1.300" stroke-linecap="round"/><path d="M24,33 C25,38 26,40 24,43 L31,52 L37,42 L35,36 C31,40 27,38 24,33 Z" fill="#b07f60"/><path d="M8,54 C10,46 18,42 25,40 L31,50 L37,40 C42,42 46,46 47,54 Z" fill="#1d2334"/><path d="M14,48 h0.1 M20,46 h0.1 M18,51 h0.1 M38,46 h0.1 M42,50 h0.1 M36,50 h0.1 M24,50 h0.1" stroke="#8f98ad" stroke-width="1.200" stroke-linecap="round"/></g></g></svg>
<div class="circ" style="left:2783.0px;top:157.5px;width:61px;height:61px;background:#3a6097;"></div>
<div class="circ" style="left:2783.0px;top:237.0px;width:61px;height:61px;background:#3a6097;"></div>
<div class="circ" style="left:2783.0px;top:317.0px;width:61px;height:61px;background:#3a6097;"></div>
<svg style="left:2798.2px;top:171.5px;" width="30.6" height="32.4" viewBox="0 0 34 36"><path d="M17,4 C10,4 8,10 8,15 C8,21 6,24 3.500,26 V27.500 H30.500 V26 C28,24 26,21 26,15 C26,10 24,4 17,4 Z" fill="none" stroke="#d9e1ee" stroke-width="2.6" stroke-linejoin="round"/><path d="M15,3.500 Q17,1 19,3.500" stroke="#d9e1ee" stroke-width="2.4" fill="none"/><path d="M13,31.500 Q17,34.500 21,31.500" stroke="#d9e1ee" stroke-width="2.6" fill="none" stroke-linecap="round"/></svg>
<svg style="left:2796.5px;top:250.5px;" width="34" height="34" viewBox="0 0 34 34"><path d="M25.800,6.200 A14,14 0 1 0 30.900,18.500" fill="none" stroke="#d9e1ee" stroke-width="2.500" stroke-linecap="round"/><circle cx="16.500" cy="17" r="8.300" fill="none" stroke="#d9e1ee" stroke-width="2.400"/><path d="M15.300,12 Q16,15.300 19.300,16 Q16,16.700 15.300,20 Q14.600,16.700 11.300,16 Q14.600,15.300 15.300,12 Z" fill="none" stroke="#d9e1ee" stroke-width="1.300" stroke-linejoin="round"/><circle cx="20" cy="20.500" r="1.400" fill="#d9e1ee"/></svg>
<svg style="left:2795.5px;top:330.5px;" width="36" height="36" viewBox="0 0 36 36"><path d="M17,2 A15,15 0 1 0 27,28 L33,32 L31,25 A15,15 0 0 0 17,2 Z" fill="none" stroke="#d9e1ee" stroke-width="2.6" stroke-linejoin="round"/><path d="M10,13 H24 M10,13 L13.500,9.500 M10,13 L13.500,16.500" stroke="#d9e1ee" stroke-width="2.6" fill="none" stroke-linecap="round" stroke-linejoin="round"/><path d="M24,21 H10 M24,21 L20.500,17.500 M24,21 L20.500,24.500" stroke="#d9e1ee" stroke-width="2.6" fill="none" stroke-linecap="round" stroke-linejoin="round"/></svg>
<div class="a" style="left:2791px;top:412px;width:45px;height:2px;background:rgba(255,255,255,.22);"></div>
<div class="circ" style="left:2783.0px;top:447.5px;width:61px;height:61px;border:2.5px solid #5c5cc2"></div>
<svg style="left:2788.0px;top:452.5px;" width="51" height="51" viewBox="0 0 55 55"><defs><clipPath id="c1"><circle cx="27.500" cy="27.500" r="27.500"/></clipPath><filter id="c1b"><feGaussianBlur stdDeviation="0.900"/></filter></defs><g clip-path="url(#c1)"><rect width="55" height="55" fill="#0d4189"/><g filter="url(#c1b)"><ellipse cx="28" cy="13" rx="13" ry="8.500" fill="#2462b0"/><ellipse cx="28.500" cy="24" rx="6.500" ry="8.500" fill="#56699b"/><path d="M21,24 C19,34 17,42 18,52 L24,52 C22,42 23,34 24,28 Z" fill="#39477a"/><path d="M36,24 C38,34 39,42 38,52 L32,52 C34,42 33,34 33,28 Z" fill="#39477a"/><path d="M12,55 C14,44 21,40 28,38 C36,40 44,43 47,55 Z" fill="#2a5ca6"/><path d="M25,33 L28,46 L32,33 Z" fill="#6a80ad"/></g></g></svg>
<svg style="left:2782.5px;top:535.7px;" width="62" height="62" viewBox="0 0 62 62"><circle cx="31" cy="31" r="29.2" fill="none" stroke="#5f76c6" stroke-width="2.300"/><circle cx="31" cy="31" r="25.500" fill="#4a3bb6"/><path d="M41.700,22.600 A13.600,13.600 0 1 0 44.500,32.200" fill="none" stroke="#93a6d3" stroke-width="4.400" stroke-linecap="round"/><circle cx="31" cy="31" r="10" fill="#93a6d3"/><path d="M28.600,24 Q29.600,28.800 34.400,29.800 Q29.600,30.800 28.600,35.600 Q27.600,30.800 22.800,29.800 Q27.600,28.800 28.600,24 Z" fill="#4a3bb6"/><path d="M34.700,32 Q35.300,34.600 37.900,35.200 Q35.300,35.800 34.700,38.400 Q34.100,35.800 31.500,35.200 Q34.100,34.600 34.700,32 Z" fill="#4a3bb6"/></svg>
<svg style="left:2782.5px;top:709.4px;" width="62" height="62" viewBox="0 0 62 62"><circle cx="31" cy="31" r="29.2" fill="none" stroke="#5f76c6" stroke-width="2.300"/><circle cx="31" cy="31" r="25.500" fill="#4a3bb6"/><path d="M41.700,22.600 A13.600,13.600 0 1 0 44.500,32.200" fill="none" stroke="#93a6d3" stroke-width="4.400" stroke-linecap="round"/><circle cx="31" cy="31" r="10" fill="#93a6d3"/><path d="M28.600,24 Q29.600,28.800 34.400,29.800 Q29.600,30.800 28.600,35.600 Q27.600,30.800 22.800,29.800 Q27.600,28.800 28.600,24 Z" fill="#4a3bb6"/><path d="M34.700,32 Q35.300,34.600 37.900,35.200 Q35.300,35.800 34.700,38.400 Q34.100,35.800 31.500,35.200 Q34.100,34.600 34.700,32 Z" fill="#4a3bb6"/></svg>
<svg style="left:2782.5px;top:1146.3px;" width="62" height="62" viewBox="0 0 62 62"><circle cx="31" cy="31" r="29.2" fill="none" stroke="#5f76c6" stroke-width="2.300"/><circle cx="31" cy="31" r="25.500" fill="#4a3bb6"/><path d="M41.700,22.600 A13.600,13.600 0 1 0 44.500,32.200" fill="none" stroke="#93a6d3" stroke-width="4.400" stroke-linecap="round"/><circle cx="31" cy="31" r="10" fill="#93a6d3"/><path d="M28.600,24 Q29.600,28.800 34.400,29.800 Q29.600,30.800 28.600,35.600 Q27.600,30.800 22.800,29.800 Q27.600,28.800 28.600,24 Z" fill="#4a3bb6"/><path d="M34.700,32 Q35.300,34.600 37.900,35.200 Q35.300,35.800 34.700,38.400 Q34.100,35.800 31.500,35.200 Q34.100,34.600 34.700,32 Z" fill="#4a3bb6"/></svg>
<div class="circ" style="left:2783.0px;top:623.2px;width:61px;height:61px;background:#57597a;"></div>
<svg style="left:2797.5px;top:637.7px;" width="32" height="32" viewBox="0 0 32 32"><path d="M2,0 H30 Q32,0 32,2 V30 Q32,32 30,32 H2 Q0,32 0,30 V2 Q0,0 2,0 Z M5,5 V19 H11 V24 H21 V19 H27 V5 Z" fill="#8299bd" fill-rule="evenodd"/><path d="M10.500,12 L14.500,16 L21.500,8.500" stroke="#8299bd" stroke-width="3.2" fill="none"/></svg>
<div class="circ" style="left:2783.0px;top:797.3px;width:61px;height:61px;background:linear-gradient(180deg,#2c97bd,#1f79b8);"></div>
<svg style="left:2791.5px;top:808.8px;" width="46" height="40" viewBox="0 0 46 40"><path d="M22,14 H42 Q45,14 45,17 V29 Q45,32 42,32 H41 V37 L35,32 H22 Q19,32 19,29 V17 Q19,14 22,14 Z" fill="#5d9ccc"/><path d="M4,0 H30 Q34,0 34,4 V19 Q34,23 30,23 H14 L8,29 V23 H4 Q0,23 0,19 V4 Q0,0 4,0 Z" fill="#7fb3d6"/><path d="M6,7 H24 M6,13 H20" stroke="#5e9c6a" stroke-width="3.2"/></svg>
<div class="circ" style="left:2783.0px;top:884.5px;width:61px;height:61px;background:#8b3f5c;"></div>
<svg style="left:2791.5px;top:896.5px;" width="46" height="37" viewBox="0 0 42 34"><path d="M26,8 C26,3 33,3 33,8 C33,11 33,13 34,15 C33,17 32,17 31,17 L31,19 C35,21 40,22 40,27 H30 L27,22 L28,17 C26,16 26,12 26,8 Z" fill="#8299bd"/><path d="M8,8 C8,0 22,0 22,8 C22,11 21,15 19,17 L19,20 C25,23 30,24 30,32 H0 C0,24 5,23 11,20 L11,17 C9,15 8,11 8,8 Z" fill="#8299bd"/></svg>
<div class="circ" style="left:2783.0px;top:972.3px;width:61px;height:61px;background:#2f7a86;"></div>
<svg style="left:2791.5px;top:984.3px;" width="46" height="37" viewBox="0 0 42 34"><path d="M26,8 C26,3 33,3 33,8 C33,11 33,13 34,15 C33,17 32,17 31,17 L31,19 C35,21 40,22 40,27 H30 L27,22 L28,17 C26,16 26,12 26,8 Z" fill="#8299bd"/><path d="M8,8 C8,0 22,0 22,8 C22,11 21,15 19,17 L19,20 C25,23 30,24 30,32 H0 C0,24 5,23 11,20 L11,17 C9,15 8,11 8,8 Z" fill="#8299bd"/></svg>
<div class="circ" style="left:2783.0px;top:1059.5px;width:61px;height:61px;background:#1b8a9d;"></div>
<svg style="left:2791.5px;top:1071.5px;" width="46" height="37" viewBox="0 0 42 34"><path d="M26,8 C26,3 33,3 33,8 C33,11 33,13 34,15 C33,17 32,17 31,17 L31,19 C35,21 40,22 40,27 H30 L27,22 L28,17 C26,16 26,12 26,8 Z" fill="#8299bd"/><path d="M8,8 C8,0 22,0 22,8 C22,11 21,15 19,17 L19,20 C25,23 30,24 30,32 H0 C0,24 5,23 11,20 L11,17 C9,15 8,11 8,8 Z" fill="#8299bd"/></svg>
<div class="circ" style="left:2783.0px;top:1235.1px;width:61px;height:61px;background:#2a73ad;"></div>
<svg style="left:2797.5px;top:1249.6px;" width="32" height="32" viewBox="0 0 32 32"><path d="M2,0 H30 Q32,0 32,2 V30 Q32,32 30,32 H2 Q0,32 0,30 V2 Q0,0 2,0 Z M5,5 V19 H11 V24 H21 V19 H27 V5 Z" fill="#8299bd" fill-rule="evenodd"/><path d="M10.500,12 L14.500,16 L21.500,8.500" stroke="#8299bd" stroke-width="3.2" fill="none"/></svg>
<svg style="left:2783.0px;top:1322.2px;" width="61" height="61" viewBox="0 0 61 61"><defs><clipPath id="c2"><circle cx="30.500" cy="30.500" r="30.500"/></clipPath><filter id="c2b"><feGaussianBlur stdDeviation="0.800"/></filter></defs><g clip-path="url(#c2)"><rect width="61" height="61" fill="#62789d"/><g filter="url(#c2b)"><path d="M19.500,48 C21,41 25,38 31,38 C37,38 41,41 42.500,48 L44,61 H18 Z" fill="#7b90b6"/><path d="M4,61 C5,47 14,42 23,40 L30,58 L38,40 C47,42 56,47 58,61 Z" fill="#11264f"/><path d="M26,36 L36,36 L36,42 Q31,47 26,42 Z" fill="#4b5a83"/><ellipse cx="31" cy="27.500" rx="9.500" ry="11.500" fill="#54658e"/><path d="M20.500,25 C19,13 27,8 33,9 C40,9.500 43,16 41.500,25 C40,19 36,17 31,17.500 C26,17.500 22,19 20.500,25 Z" fill="#1c2945"/><path d="M26.500,32.500 Q31,36 35.500,32.500 Q31,34 26.500,32.500 Z" fill="#9aa8c6"/></g></g></svg>
<div class="circ" style="left:2783.0px;top:1409.5px;width:61px;height:61px;background:#2f6d52;"></div>
<svg style="left:2797.5px;top:1424px;" width="32" height="32" viewBox="0 0 32 32"><path d="M2,0 H30 Q32,0 32,2 V30 Q32,32 30,32 H2 Q0,32 0,30 V2 Q0,0 2,0 Z M5,5 V19 H11 V24 H21 V19 H27 V5 Z" fill="#8299bd" fill-rule="evenodd"/><path d="M10.500,12 L14.500,16 L21.500,8.500" stroke="#8299bd" stroke-width="3.2" fill="none"/></svg>
<div class="circ" style="left:2783.0px;top:1497.2px;width:61px;height:61px;background:#14808f;"></div>
<svg style="left:2797.5px;top:1511.7px;" width="32" height="32" viewBox="0 0 32 32"><path d="M2,0 H30 Q32,0 32,2 V30 Q32,32 30,32 H2 Q0,32 0,30 V2 Q0,0 2,0 Z M5,5 V19 H11 V24 H21 V19 H27 V5 Z" fill="#8299bd" fill-rule="evenodd"/><path d="M10.500,12 L14.500,16 L21.500,8.500" stroke="#8299bd" stroke-width="3.2" fill="none"/></svg>
</body>
</html>
